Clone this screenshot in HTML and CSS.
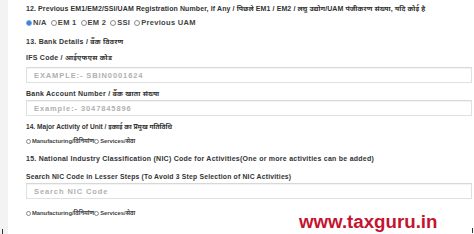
FILE: index.html
```html
<!DOCTYPE html>
<html>
<head>
<meta charset="utf-8">
<link rel="stylesheet" href="styles.css">
</head>
<body>
<div class="page">
  <div class="strip"></div>
  <div class="content">
    <div class="lbl l12">12. Previous EM1/EM2/SSI/UAM Registration Number, If Any / पिछले EM1 / EM2 / लघु उद्योग/UAM पंजीकरण संख्या, यदि कोई है</div>
    <div class="radios r12">
      <span class="opt"><span class="rb on"></span>N/A</span>
      <span class="opt"><span class="rb"></span>EM 1</span>
      <span class="opt"><span class="rb"></span>EM 2</span>
      <span class="opt"><span class="rb"></span>SSI</span>
      <span class="opt"><span class="rb"></span>Previous UAM</span>
    </div>
    <div class="lbl l13">13. Bank Details / बैंक विवरण</div>
    <div class="lbl lifs">IFS Code / आईएफएस कोड</div>
    <input class="field f1" type="text" placeholder="EXAMPLE:- SBIN0001624">
    <div class="lbl lacc">Bank Account Number / बैंक खाता संख्या</div>
    <input class="field f2" type="text" placeholder="Example:- 3047845896">
    <div class="lbl l14">14. Major Activity of Unit / इकाई का प्रमुख गतिविधि</div>
    <div class="radios tight r14">
      <span class="opt"><span class="rb"></span>Manufacturing/विनिर्माण</span>
      <span class="opt"><span class="rb"></span>Services/सेवा</span>
    </div>
    <div class="lbl l15">15. National Industry Classification (NIC) Code for Activities(One or more activities can be added)</div>
    <div class="lbl lsearch">Search NIC Code in Lesser Steps (To Avoid 3 Step Selection of NIC Activities)</div>
    <input class="field f3" type="text" placeholder="Search NIC Code">
    <div class="radios tight r16">
      <span class="opt"><span class="rb"></span>Manufacturing/विनिर्माण</span>
      <span class="opt"><span class="rb"></span>Services/सेवा</span>
    </div>
  </div>
  <div class="watermark">www.taxguru.in</div>
  <span class="tick tick-l"></span>
  <span class="tick tick-r"></span>
</div>
</body>
</html>
```
FILE: styles.css
```css
html, body {
  margin: 0;
  padding: 0;
  background: #ffffff;
}
.page {
  position: relative;
  display: flex;
  width: 474px;
  height: 234px;
  overflow: hidden;
  font-family: "Liberation Sans", Arial, "Noto Sans", sans-serif;
  color: #2b2b2b;
}
.strip {
  width: 8px;
  flex: none;
  background: #f3f3f3;
}
.content {
  flex: 1;
  display: flex;
  flex-direction: column;
  padding-left: 18px;
  padding-right: 2px;
}
.lbl {
  font-size: 7px;
  font-weight: bold;
  letter-spacing: 0.25px;
  line-height: 8px;
  height: 8px;
  white-space: nowrap;
  color: #333;
}
.l12 { margin-top: 5px; letter-spacing: 0.1px; }
.r12 { margin-top: 6px; }
.l13 { margin-top: 11px; }
.lifs { margin-top: 8px; }
.f1 { margin-top: 5px; }
.lacc { margin-top: 7px; }
.f2 { margin-top: 2px; height: 17px; }
.l14 { margin-top: 7px; font-size: 6.6px; letter-spacing: 0; }
.r14 { margin-top: 6px; }
.l15 { margin-top: 10px; }
.lsearch { margin-top: 10px; font-size: 6.8px; letter-spacing: 0.2px; }
.f3 { margin-top: 2px; height: 18px; }
.r16 { margin-top: 10px; }

.radios {
  display: flex;
  gap: 4px;
  height: 8px;
  line-height: 8px;
  font-size: 7.5px;
  letter-spacing: 0.3px;
  font-weight: bold;
  color: #444;
  white-space: nowrap;
}
.radios.tight {
  gap: 0;
  font-size: 5.8px;
  letter-spacing: 0;
}
.opt {
  display: flex;
  align-items: center;
}
.rb {
  width: 6px;
  height: 6px;
  border: 0.8px solid #8a8a8a;
  border-radius: 50%;
  box-sizing: border-box;
  margin-right: 1px;
  background: #fff;
}
.radios.tight .rb {
  width: 5px;
  height: 5px;
}
.rb.on {
  background: #3d7fd9;
  border-color: #7aa7e6;
}
.field {
  display: block;
  box-sizing: border-box;
  width: 446px;
  height: 16px;
  margin-left: 0;
  padding: 0 0 0 7px;
  border: 1px solid #e0e0e0;
  border-top-color: #d8d8d8;
  box-shadow: inset 0 1px 1px rgba(0,0,0,0.05);
  background: #fff;
  font-family: "Liberation Sans", Arial, sans-serif;
  font-size: 7.5px;
  font-weight: bold;
  letter-spacing: 0.9px;
  color: #444;
  outline: none;
}
.field::placeholder {
  color: #b0b0b0;
}
.watermark {
  position: absolute;
  left: 299px;
  top: 212px;
  font-family: "Liberation Sans", Arial, sans-serif;
  font-size: 18.7px;
  font-weight: bold;
  line-height: 20px;
  color: #c4142f;
  white-space: nowrap;
}
.tick {
  position: absolute;
  width: 1px;
  height: 5px;
  background: #333;
  bottom: 0;
}
.tick-l { left: 2px; }
.tick-r { right: 1px; bottom: 1px; }
```
